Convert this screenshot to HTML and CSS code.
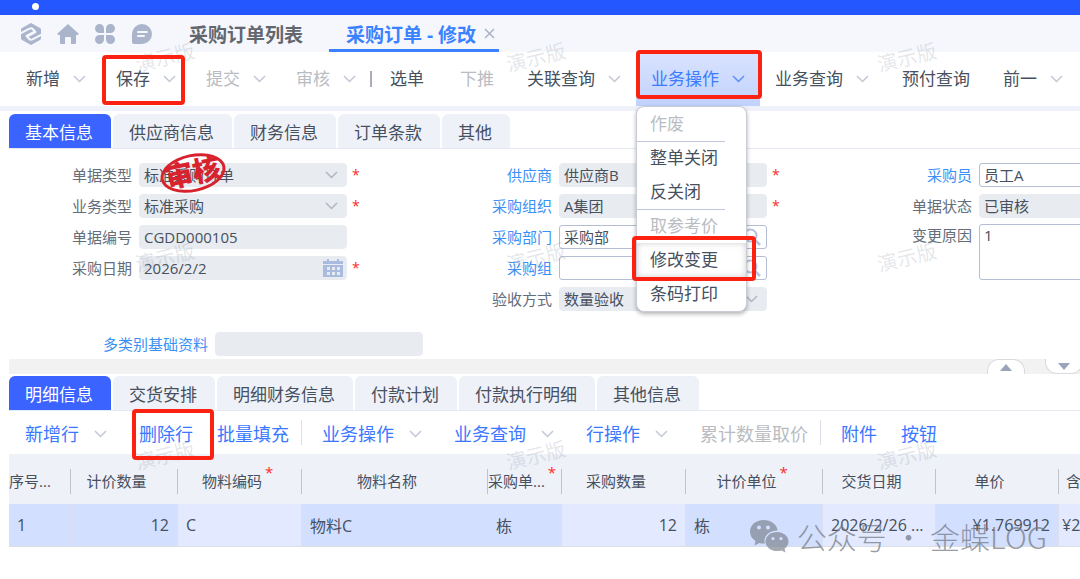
FILE: index.html
```html
<!DOCTYPE html>
<html lang="zh-CN">
<head>
    <meta charset="utf-8">
    <title>采购订单 - 修改</title>
    <link rel="stylesheet" href="styles.css">
</head>
<body>
    <svg class="sprite" width="0" height="0">
        <symbol id="chevron" viewBox="0 0 13 8"><path d="M1 1l5.5 5.5L12 1" fill="none" stroke="currentColor" stroke-width="1.5"/></symbol>
        <symbol id="search" viewBox="0 0 18 18"><circle cx="7.5" cy="7.5" r="6" fill="none" stroke="currentColor" stroke-width="2"/><path d="M12 12l5 5" stroke="currentColor" stroke-width="2.5"/></symbol>
    </svg>

    <div class="topbar"><span class="dot"></span></div>

    <header class="pages">
        <nav class="icons">
            <a href="#" aria-label="工作台"><svg width="22" height="24" viewBox="0 0 22 24"><path fill="#aab5cc" d="M11 1l9 5q1 .6 1 2v8q0 1.400-1 2l-9 5-9-5q-1-.6-1-2V8q0-1.400 1-2z"/><path fill="none" stroke="#f5f7fc" stroke-width="2" d="M0 11.500l9.500-4.800q2-.9 3.200.3l2.300 2.500-9 4.700M22 12.500l-9.500 4.800q-2 .9-3.200-.3L7 14.500l9-4.700"/></svg></a>
            <a href="#" aria-label="首页"><svg width="22" height="22" viewBox="0 0 22 22"><path fill="#aab5cc" d="M11 1l10.500 9.500q.5 1.500-1 1.500H19v8q0 1-1 1h-4v-6q0-1-1-1H9q-1 0-1 1v6H4q-1 0-1-1v-8H1.500q-1.500 0-1-1.500z"/></svg></a>
            <a href="#" aria-label="应用"><svg width="22" height="22" viewBox="0 0 22 22"><g fill="#aab5cc"><path d="M5.500 1A4.500 4.500 0 0 1 10 5.500V10H5.500a4.500 4.500 0 0 1 0-9zM16.500 1a4.500 4.500 0 0 1 0 9H12V5.500A4.500 4.500 0 0 1 16.500 1zM5.500 12H10v4.500A4.500 4.500 0 1 1 5.500 12zM12 12h4.500a4.500 4.500 0 1 1-4.500 4.500z"/></g></svg></a>
            <a href="#" aria-label="消息"><svg width="22" height="22" viewBox="0 0 22 22"><path fill="#aab5cc" d="M11 1a10 10 0 0 1 0 20H3q-2 0-2-2v-8A10 10 0 0 1 11 1z"/><path stroke="#f5f7fc" stroke-width="2" stroke-linecap="round" d="M7 9h9M7 13h6"/></svg></a>
        </nav>
        <a class="page" href="#">采购订单列表</a>
        <a class="page current" href="#">采购订单 - 修改 <svg class="close" width="11" height="11" viewBox="0 0 11 11"><path d="M1 1l9 9M10 1l-9 9" stroke="#aab3c4" stroke-width="1.500"/></svg></a>
    </header>

    <div class="toolbar">
        <button class="tool">新增<svg class="chevron"><use href="#chevron"/></svg></button>
        <button class="tool">保存<svg class="chevron"><use href="#chevron"/></svg><span class="mark mark-save"></span></button>
        <button class="tool" disabled>提交<svg class="chevron"><use href="#chevron"/></svg></button>
        <button class="tool" disabled>审核<svg class="chevron"><use href="#chevron"/></svg></button>
        <span class="bar"></span>
        <button class="tool plain">选单</button>
        <button class="tool plain" disabled>下推</button>
        <button class="tool">关联查询<svg class="chevron"><use href="#chevron"/></svg></button>
        <div class="dropdown">
            <button class="tool open">业务操作<svg class="chevron"><use href="#chevron"/></svg><span class="mark mark-business"></span></button>
            <div class="menu">
                <button disabled>作废</button>
                <hr>
                <button>整单关闭</button>
                <button>反关闭</button>
                <hr>
                <button disabled>取参考价</button>
                <button class="hover">修改变更<span class="mark mark-change"></span></button>
                <button>条码打印</button>
            </div>
        </div>
        <button class="tool">业务查询<svg class="chevron"><use href="#chevron"/></svg></button>
        <button class="tool plain">预付查询</button>
        <button class="tool">前一<svg class="chevron"><use href="#chevron"/></svg></button>
    </div>

    <main>
        <div class="tabs">
            <button class="tab active">基本信息</button>
            <button class="tab">供应商信息</button>
            <button class="tab">财务信息</button>
            <button class="tab">订单条款</button>
            <button class="tab">其他</button>
        </div>

        <form class="form">
            <div class="column">
                <div class="row">
                    <label for="billType">单据类型</label>
                    <div class="field"><select id="billType" disabled><option>标准采购订单</option></select><svg class="chevron"><use href="#chevron"/></svg><span class="stamp">审核</span></div>
                    <span class="star">*</span>
                </div>
                <div class="row">
                    <label for="bizType">业务类型</label>
                    <div class="field"><select id="bizType" disabled><option>标准采购</option></select><svg class="chevron"><use href="#chevron"/></svg></div>
                    <span class="star">*</span>
                </div>
                <div class="row">
                    <label for="billNo">单据编号</label>
                    <div class="field"><input type="text" id="billNo" value="CGDD000105" disabled></div>
                </div>
                <div class="row">
                    <label for="date">采购日期</label>
                    <div class="field"><input type="text" id="date" value="2026/2/2" disabled><svg class="calendar" width="20" height="18" viewBox="0 0 20 18"><path fill="#a9bcdf" d="M0 2h4V0h2v2h8V0h2v2h4v3H0zM0 6h20v12H0z"/><path fill="#e8ebf0" d="M4 8h3v3H4zm5 0h3v3H9zm5 0h3v3h-3zM4 13h3v3H4zm5 0h3v3H9zm5 0h3v3h-3z"/></svg></div>
                    <span class="star">*</span>
                </div>
            </div>
            <div class="column">
                <div class="row">
                    <label class="link" for="supplier">供应商</label>
                    <div class="field"><input type="text" id="supplier" value="供应商B" disabled></div>
                    <span class="star">*</span>
                </div>
                <div class="row">
                    <label class="link" for="org">采购组织</label>
                    <div class="field"><input type="text" id="org" value="A集团" disabled></div>
                    <span class="star">*</span>
                </div>
                <div class="row">
                    <label class="link" for="dept">采购部门</label>
                    <div class="field"><input type="text" id="dept" value="采购部"><svg class="search"><use href="#search"/></svg></div>
                </div>
                <div class="row">
                    <label class="link" for="group">采购组</label>
                    <div class="field"><input type="text" id="group"><svg class="search"><use href="#search"/></svg></div>
                </div>
                <div class="row">
                    <label for="check">验收方式</label>
                    <div class="field"><select id="check" disabled><option>数量验收</option></select><svg class="chevron"><use href="#chevron"/></svg></div>
                </div>
            </div>
            <div class="column">
                <div class="row">
                    <label class="link" for="buyer">采购员</label>
                    <div class="field"><input type="text" id="buyer" value="员工A"></div>
                </div>
                <div class="row">
                    <label for="status">单据状态</label>
                    <div class="field"><input type="text" id="status" value="已审核" disabled></div>
                </div>
                <div class="row top">
                    <label for="reason">变更原因</label>
                    <div class="field"><textarea id="reason">1</textarea></div>
                </div>
            </div>
            <div class="row extra">
                <label class="link" for="multi">多类别基础资料</label>
                <div class="field"><input type="text" id="multi" disabled></div>
            </div>
        </form>

        <div class="splitter">
            <button class="fold up" aria-label="收起"></button>
            <button class="fold down" aria-label="展开"></button>
        </div>

        <div class="tabs">
            <button class="tab active">明细信息</button>
            <button class="tab">交货安排</button>
            <button class="tab">明细财务信息</button>
            <button class="tab">付款计划</button>
            <button class="tab">付款执行明细</button>
            <button class="tab">其他信息</button>
        </div>

        <div class="actions">
            <button class="action more">新增行<svg class="chevron"><use href="#chevron"/></svg></button>
            <button class="action">删除行<span class="mark mark-delete"></span></button>
            <button class="action">批量填充</button>
            <span class="line"></span>
            <button class="action more">业务操作<svg class="chevron"><use href="#chevron"/></svg></button>
            <button class="action more">业务查询<svg class="chevron"><use href="#chevron"/></svg></button>
            <button class="action more">行操作<svg class="chevron"><use href="#chevron"/></svg></button>
            <button class="action" disabled>累计数量取价</button>
            <span class="line"></span>
            <button class="action">附件</button>
            <button class="action">按钮</button>
        </div>

        <div class="scroll">
            <table class="grid">
                <colgroup>
                    <col class="c-no"><col class="c-qty"><col class="c-code"><col class="c-name"><col class="c-unit"><col class="c-buy"><col class="c-price-unit"><col class="c-date"><col class="c-price"><col class="c-tax">
                </colgroup>
                <thead>
                    <tr>
                        <th class="left"><span>序号...</span></th>
                        <th><span>计价数量</span></th>
                        <th><span>物料编码<i>*</i></span></th>
                        <th><span>物料名称</span></th>
                        <th class="left"><span>采购单...<i>*</i></span></th>
                        <th><span>采购数量</span></th>
                        <th><span>计价单位<i>*</i></span></th>
                        <th><span>交货日期</span></th>
                        <th><span>单价</span></th>
                        <th class="left tax"><span>含</span></th>
                    </tr>
                </thead>
                <tbody>
                    <tr>
                        <td>1</td>
                        <td class="num">12</td>
                        <td class="edit">C</td>
                        <td>物料C</td>
                        <td>栋</td>
                        <td class="num edit">12</td>
                        <td>栋</td>
                        <td class="edit">2026/2/26 ...</td>
                        <td class="num">¥1.769912</td>
                        <td class="edit tight">¥2</td>
                    </tr>
                </tbody>
            </table>
        </div>
    </main>

    <div class="trial t1">演示版</div>
    <div class="trial t2">演示版</div>
    <div class="trial t3">演示版</div>
    <div class="trial t4">演示版</div>
    <div class="trial t5">演示版</div>
    <div class="trial t6">演示版</div>
    <div class="trial t7">演示版</div>
    <div class="trial t8">演示版</div>
    <div class="trial t9">演示版</div>

    <div class="account">
        <svg width="40" height="34" viewBox="0 0 40 34"><path fill="#7f8692" fill-rule="evenodd" d="M14.500 1C22 1 28 5.500 28.500 11.500 21 11.500 15.500 16 15.500 22l.3 2.500q-3 .3-5.500-.5L5.500 26.500 6.500 22Q1 18.500 1 12.500C1 6 7 1 14.500 1zM10 6.500a2 2 0 1 0 0 4 2 2 0 0 0 0-4zm9 0a2 2 0 1 0 0 4 2 2 0 0 0 0-4z"/><path fill="#7f8692" fill-rule="evenodd" d="M28 13c6.500 0 11.500 4.300 11.500 9.500 0 3-1.500 5.500-4 7.300l1 3.700-4-2q-2 .6-4.500.6c-6.500 0-11.500-4.300-11.500-9.600S21.500 13 28 13zm-4 5a1.600 1.600 0 1 0 0 3.200 1.600 1.600 0 0 0 0-3.200zm8 0a1.600 1.600 0 1 0 0 3.200 1.600 1.600 0 0 0 0-3.200z"/></svg>
        <span>公众号 · 金蝶LOG</span>
    </div>
</body>
</html>
```
FILE: styles.css
```css
* {
    box-sizing: border-box;
}

body {
    margin: 0;
    position: relative;
    min-height: 100vh;
    overflow: hidden;
    background-color: #fff;
    color: #46505e;
    font-family: "Open Sans", "Noto Sans CJK SC", sans-serif;
    font-size: 15px;
}

button, input, select, textarea {
    font: inherit;
    color: inherit;
    margin: 0;
    border: none;
    background: none;
}

a {
    color: inherit;
    text-decoration: none;
}

.sprite {
    position: absolute;
}

.topbar {
    height: 15px;
    padding: 3px 32px;
    background-color: #2457ff;
}

.dot {
    display: block;
    width: 7px;
    height: 7px;
    border-radius: 50%;
    background-color: #fff;
}

/* open pages */
.pages {
    display: flex;
    height: 37px;
    padding-left: 20px;
    background-color: #f5f7fc;
}

.icons {
    display: flex;
    align-items: center;
    gap: 15px;
    margin-right: 20px;
}

.icons a, .icons svg {
    display: block;
}

.page {
    display: flex;
    align-items: center;
    margin-right: 10px;
    padding: 0 16px;
    font-size: 19px;
    font-weight: bold;
    color: #62666d;
}

.page.current {
    gap: 8px;
    padding: 3px 4px 0 17px;
    border-bottom: 3px solid #3a82ff;
    color: #3a82ff;
}

/* toolbar */
.toolbar {
    display: flex;
    height: 59px;
    padding-left: 11px;
    border-bottom: 5px solid #eff2fa;
    font-size: 17px;
}

.tool {
    position: relative;
    display: flex;
    flex: none;
    align-items: center;
    gap: 13px;
    height: 54px;
    padding: 0 15px 4px;
    white-space: nowrap;
}

.tool.plain {
    padding: 0 18px 4px;
}

.tool:disabled {
    color: #b9bcc2;
}

.chevron {
    flex: none;
    width: 13px;
    height: 8px;
    color: #c3c7d6;
}

.tool .chevron, .action .chevron {
    margin-top: 3px;
}

.bar {
    align-self: center;
    width: 2px;
    height: 16px;
    margin-left: -1px;
    background-color: #a9adb5;
}

.dropdown {
    position: relative;
    flex: none;
}

.tool.open {
    background: linear-gradient(#d9e3fd, #c2d2fe);
    color: #3a7cff;
}

.tool.open .chevron {
    color: #5b8fff;
}

.menu {
    position: absolute;
    z-index: 2;
    top: 54px;
    left: 0;
    width: 111px;
    border: 1px solid #c9ccd4;
    border-radius: 8px;
    background-color: #fff;
    box-shadow: 0 2px 4px rgba(0, 0, 0, 0.3);
}

.menu button {
    position: relative;
    display: block;
    width: 100%;
    height: 34px;
    padding: 0 13px 4px;
    text-align: left;
    white-space: nowrap;
}

.menu button:disabled {
    color: #b9bcc2;
}

.menu button.hover {
    box-shadow: inset 0 0 6px rgba(0, 0, 0, 0.2);
}

.menu hr {
    width: 88px;
    height: 1px;
    margin: 0 0 -1px;
    border: none;
    background-color: #c0c6da;
}

/* red frames round the steps */
.mark {
    position: absolute;
    z-index: 3;
    border: 4px solid #fc2212;
    border-radius: 4px;
}

.mark-save {
    top: 3px;
    left: 1px;
    width: 83px;
    height: 50px;
}

.mark-business {
    top: -2px;
    left: 0;
    width: 126px;
    height: 49px;
}

.mark-change {
    top: -7px;
    left: -5px;
    width: 124px;
    height: 45px;
}

.mark-delete {
    top: -3px;
    left: 5px;
    width: 82px;
    height: 51px;
}

/* tabs */
main {
    padding: 3px 0 0 9px;
}

.tabs {
    display: flex;
    gap: 2px;
    border-bottom: 1px solid #e6ebf3;
}

.tab {
    height: 34px;
    padding: 0 18px 0 16px;
    border-radius: 6px 6px 0 0;
    background-color: #eef1f8;
    font-size: 17px;
    white-space: nowrap;
}

.tab.active {
    background-color: #3a63ff;
    color: #fff;
}

/* form */
.form {
    display: grid;
    grid-template-columns: 420px 420px 1fr;
    padding-top: 10px;
}

.row {
    display: flex;
    align-items: center;
    height: 31px;
}

.row label {
    flex: none;
    width: 123px;
    margin-right: 7px;
    text-align: right;
    color: #646e7a;
}

.row .link {
    color: #3a90f5;
}

.field {
    position: relative;
    flex: none;
    width: 208px;
}

.field input, .field select, .field textarea {
    display: block;
    width: 100%;
    height: 24px;
    padding: 0 4px;
    border: 1px solid #b5bdd4;
    border-radius: 3px;
    background-color: #fff;
    appearance: none;
    opacity: 1;
}

.field input:disabled, .field select:disabled {
    border-color: #e8ebf0;
    border-radius: 4px;
    background-color: #e8ebf0;
    color: #46505e;
}

.field textarea {
    height: 56px;
    line-height: 20px;
    resize: none;
}

.field .chevron {
    position: absolute;
    top: 8px;
    right: 9px;
    color: #b2b6be;
}

.search {
    position: absolute;
    top: 3px;
    right: 6px;
    width: 18px;
    height: 18px;
    color: #b4c3e0;
}

.calendar {
    position: absolute;
    top: 3px;
    right: 4px;
}

.star {
    margin-left: 5px;
    color: #ff2a2a;
    font-size: 14px;
}

.row.top {
    align-items: flex-start;
    padding-top: 3px;
}

.row.extra {
    grid-column: 1 / -1;
    margin-top: 14px;
}

.row.extra label {
    width: 199px;
}

.stamp {
    position: absolute;
    top: -9px;
    left: 21px;
    width: 66px;
    height: 38px;
    border: 3px solid #d8232f;
    border-radius: 50%;
    color: #d8232f;
    font-size: 28px;
    font-weight: 900;
    line-height: 30px;
    text-align: center;
    transform: rotate(-12deg);
}

/* splitter */
.splitter {
    display: flex;
    justify-content: flex-end;
    gap: 20px;
    height: 15px;
    margin-bottom: 2px;
    background-color: #f2f2f2;
}

.fold {
    width: 38px;
    height: 15px;
    padding: 0;
    border: 1px solid #d9dade;
    background-color: #fff;
}

.fold::before {
    content: "";
    display: block;
    width: 0;
    margin: 0 auto;
    border: 6px solid transparent;
}

.fold.up {
    border-bottom: none;
    border-radius: 12px 12px 0 0;
}

.fold.up::before {
    border-top: none;
    border-bottom: 7px solid #99a3ba;
}

.fold.down {
    margin-right: -3px;
    border-top: none;
    border-radius: 0 0 12px 12px;
}

.fold.down::before {
    border-bottom: none;
    border-top: 7px solid #99a3ba;
}

/* row actions */
.actions {
    display: flex;
    align-items: center;
    height: 43px;
    font-size: 18px;
    color: #3a78ff;
}

.action {
    position: relative;
    display: flex;
    flex: none;
    align-items: center;
    height: 42px;
    padding: 0 12px;
    white-space: nowrap;
}

.action.more {
    gap: 15px;
    padding: 0 16px;
}

.more + .action:not(.more), .line + .action:not(.more) {
    margin-left: 4px;
}

.action:disabled {
    color: #b9bcc2;
}

.line {
    width: 1px;
    height: 25px;
    margin-right: 4px;
    background-color: #dcdfe8;
}

/* detail table */
.scroll {
    overflow: hidden;
}

.grid {
    width: 100%;
    table-layout: fixed;
    border-collapse: separate;
    border-spacing: 0;
}

.c-no { width: 62px; }
.c-qty { width: 107px; }
.c-code { width: 124px; }
.c-name { width: 186px; }
.c-unit { width: 74px; }
.c-buy { width: 124px; }
.c-price-unit { width: 137px; }
.c-date { width: 113px; }
.c-price { width: 123px; }

.grid th {
    height: 50px;
    padding: 4px 0 0;
    background-color: #eef1f8;
    font-weight: normal;
    white-space: nowrap;
}

.grid th span {
    position: relative;
    display: block;
    height: 25px;
    padding-right: 15px;
    border-right: 1px solid #bfc3cc;
    line-height: 25px;
}

.grid th.left {
    text-align: left;
}

.grid th.left span {
    padding-right: 0;
}

.grid th.tax {
    padding-left: 7px;
}

.grid th.tax span {
    border: none;
}

.grid th i {
    position: absolute;
    margin: -9px 0 0 3px;
    color: #ff2a2a;
    font-style: normal;
}

.grid td {
    height: 43px;
    padding: 0 8px;
    border-right: 1px solid #dbe0ea;
    border-bottom: 1px solid #dcdfe6;
    background-color: #d3dfff;
    font-size: 16px;
    white-space: nowrap;
}

.grid td.edit {
    background-color: #e3eaff;
}

.grid td.num {
    text-align: right;
}

.grid td.tight {
    padding: 0 0 0 3px;
    border-right: none;
}

/* overlays */
.trial {
    position: absolute;
    z-index: 1;
    color: rgba(120, 130, 150, 0.2);
    font-size: 20px;
    line-height: 24px;
    transform: rotate(-14deg);
    pointer-events: none;
}

.t1 { top: 46px; left: 135px; }
.t2 { top: 46px; left: 506px; }
.t3 { top: 46px; left: 877px; }
.t4 { top: 246px; left: 135px; }
.t5 { top: 246px; left: 506px; }
.t6 { top: 246px; left: 877px; }
.t7 { top: 444px; left: 135px; }
.t8 { top: 444px; left: 506px; }
.t9 { top: 444px; left: 877px; }

.account {
    position: absolute;
    z-index: 4;
    right: 33px;
    bottom: 21px;
    display: flex;
    align-items: center;
    gap: 8px;
    color: #6f7680;
    font-family: "Noto Sans CJK SC", sans-serif;
    font-size: 30px;
    font-weight: 300;
    line-height: 44px;
    opacity: 0.7;
}
```
